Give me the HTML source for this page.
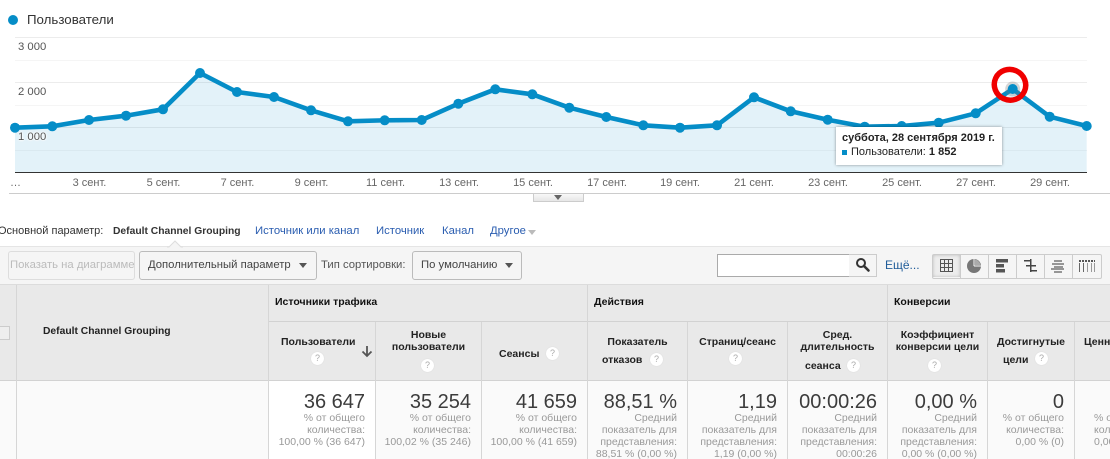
<!DOCTYPE html>
<html><head><meta charset="utf-8">
<style>
html,body{margin:0;padding:0;background:#fff;}
#p{position:relative;width:1110px;height:459px;overflow:hidden;font-family:"Liberation Sans",sans-serif;background:#fff;color:#333;}
.a{position:absolute;white-space:nowrap;}
.x{position:absolute;top:177px;font-size:11px;line-height:13px;color:#666;width:60px;text-align:center;}
.y{position:absolute;left:18px;font-size:11.3px;line-height:14px;color:#555;text-shadow:0 0 2px #fff,0 0 2px #fff,0 0 2px #fff;}
.l{position:absolute;font-size:11.3px;line-height:14px;top:224px;white-space:nowrap;}
.btn{position:absolute;top:251px;height:27px;border:1px solid #ccc;border-radius:3px;background:#f5f5f5;font-size:11.3px;line-height:27px;color:#444;white-space:nowrap;box-sizing:content-box;}
.tri{position:absolute;width:0;height:0;border-left:4px solid transparent;border-right:4px solid transparent;border-top:5px solid #555;}
.v{position:absolute;width:1px;background:#d6d6d6;}
.h{position:absolute;height:1px;background:#d2d2d2;}
.gh{position:absolute;top:295px;font-size:10.5px;font-weight:bold;line-height:14px;color:#111;white-space:nowrap;}
.ch{position:absolute;font-size:10.5px;font-weight:bold;line-height:12px;color:#222;text-align:center;white-space:nowrap;}
.q{position:absolute;width:13px;height:13px;border-radius:50%;background:#fff;color:#aaa;font-size:9px;line-height:13px;text-align:center;font-weight:normal;box-shadow:0 0 1px #ccc;}
.n{position:absolute;top:390px;font-size:20px;line-height:24px;color:#3c3c3c;text-align:right;white-space:nowrap;}
.s{position:absolute;top:412px;font-size:10.5px;line-height:12px;color:#999;text-align:right;white-space:nowrap;}
</style></head><body><div id="p">

<svg class="a" style="left:6px;top:13px" width="14" height="14"><circle cx="7" cy="7" r="5" fill="#058dc7"/></svg>
<div class="a" style="left:27px;top:12px;font-size:13.3px;line-height:16px;color:#333;">Пользователи</div>

<svg class="a" style="left:0;top:0" width="1110" height="200">
<g stroke-width="1" shape-rendering="crispEdges">
<path d="M15 37.5H1087M15 82.5H1087M15 127.5H1087" stroke="#ececec"/>
<path d="M15 60.5H1087M15 105.5H1087M15 150.5H1087" stroke="#f5f5f5"/>
</g>
<polygon fill="#058dc7" fill-opacity="0.115" points="15,127.7 52.3,126.3 89,120 126,115.7 163,109.3 200,73 237,92 274,97 311,110.3 348,121.3 384.7,120.3 421.7,120 458.3,103.7 495.3,89.3 532.3,94.3 569.3,107.7 606.3,117 643.3,125.3 680,127.7 717,125.3 754,97.3 790.7,111.3 827.7,119.7 864.7,126.7 901.7,126 938.7,122.7 975.7,113.3 1012.7,89 1049.7,116.7 1086.7,126 1086.7,172 15,172"/>
<path d="M15 172.5H1087" stroke="#333" stroke-width="1" shape-rendering="crispEdges"/>
<path d="M9 193.5H1110" stroke="#ccc" stroke-width="1" shape-rendering="crispEdges"/>
<polyline fill="none" stroke="#058dc7" stroke-width="4.6" stroke-linejoin="round" points="15,127.7 52.3,126.3 89,120 126,115.7 163,109.3 200,73 237,92 274,97 311,110.3 348,121.3 384.7,120.3 421.7,120 458.3,103.7 495.3,89.3 532.3,94.3 569.3,107.7 606.3,117 643.3,125.3 680,127.7 717,125.3 754,97.3 790.7,111.3 827.7,119.7 864.7,126.7 901.7,126 938.7,122.7 975.7,113.3 1012.7,89 1049.7,116.7 1086.7,126"/>
<g fill="#058dc7">
<circle cx="15" cy="127.7" r="5"/><circle cx="52.3" cy="126.3" r="5"/><circle cx="89" cy="120" r="5"/><circle cx="126" cy="115.7" r="5"/><circle cx="163" cy="109.3" r="5"/><circle cx="200" cy="73" r="5"/><circle cx="237" cy="92" r="5"/><circle cx="274" cy="97" r="5"/><circle cx="311" cy="110.3" r="5"/><circle cx="348" cy="121.3" r="5"/><circle cx="384.7" cy="120.3" r="5"/><circle cx="421.7" cy="120" r="5"/><circle cx="458.3" cy="103.7" r="5"/><circle cx="495.3" cy="89.3" r="5"/><circle cx="532.3" cy="94.3" r="5"/><circle cx="569.3" cy="107.7" r="5"/><circle cx="606.3" cy="117" r="5"/><circle cx="643.3" cy="125.3" r="5"/><circle cx="680" cy="127.7" r="5"/><circle cx="717" cy="125.3" r="5"/><circle cx="754" cy="97.3" r="5"/><circle cx="790.7" cy="111.3" r="5"/><circle cx="827.7" cy="119.7" r="5"/><circle cx="864.7" cy="126.7" r="5"/><circle cx="901.7" cy="126" r="5"/><circle cx="938.7" cy="122.7" r="5"/><circle cx="975.7" cy="113.3" r="5"/><circle cx="1049.7" cy="116.7" r="5"/><circle cx="1086.7" cy="126" r="5"/>
</g>
<circle cx="1012.7" cy="89" r="7.5" fill="#777" fill-opacity="0.3"/>
<circle cx="1012.7" cy="89" r="5" fill="#058dc7"/>
<ellipse cx="1010" cy="84.8" rx="15.8" ry="15.3" fill="none" stroke="#f00000" stroke-width="5.5" transform="rotate(25 1010 84.8)"/>
</svg>

<div class="y" style="top:40px">3 000</div>
<div class="y" style="top:85px">2 000</div>
<div class="y" style="top:130px">1 000</div>

<div class="a" style="left:10px;top:177px;font-size:11px;line-height:13px;color:#666;">…</div>
<div class="x" style="left:59.5px">3 сент.</div>
<div class="x" style="left:133.5px">5 сент.</div>
<div class="x" style="left:207.5px">7 сент.</div>
<div class="x" style="left:281.5px">9 сент.</div>
<div class="x" style="left:355.5px">11 сент.</div>
<div class="x" style="left:429px">13 сент.</div>
<div class="x" style="left:503px">15 сент.</div>
<div class="x" style="left:577px">17 сент.</div>
<div class="x" style="left:650px">19 сент.</div>
<div class="x" style="left:724px">21 сент.</div>
<div class="x" style="left:798px">23 сент.</div>
<div class="x" style="left:872px">25 сент.</div>
<div class="x" style="left:946px">27 сент.</div>
<div class="x" style="left:1020px">29 сент.</div>

<div class="a" style="left:836px;top:127px;width:166px;height:38px;background:#fff;box-shadow:0 0 3px rgba(0,0,0,.4);"></div>
<div class="a" style="left:842px;top:131px;font-size:11px;font-weight:bold;line-height:14px;color:#222;">суббота, 28 сентября 2019 г.</div>
<div class="a" style="left:842px;top:150px;width:5px;height:5px;background:#058dc7;"></div>
<div class="a" style="left:851px;top:145px;font-size:11px;line-height:14px;color:#222;">Пользователи: <b>1 852</b></div>

<div class="a" style="left:533px;top:194px;width:49px;height:7px;border:1px solid #ccc;border-top:0;background:linear-gradient(#f8f8f8,#e6e6e6);"></div>
<div class="tri" style="left:554px;top:195px;border-top-color:#666;"></div>

<div class="l" style="left:-2px;color:#333;font-size:11px;">Основной параметр:</div>
<div class="l" style="left:113px;top:225px;font-weight:bold;color:#333;font-size:10.3px;">Default Channel Grouping</div>
<div class="l" style="left:255px;color:#2a5db0;">Источник или канал</div>
<div class="l" style="left:376px;color:#2a5db0;">Источник</div>
<div class="l" style="left:442px;color:#2a5db0;">Канал</div>
<div class="l" style="left:490px;color:#2a5db0;">Другое</div>
<div class="tri" style="left:528px;top:230px;border-top-color:#bbb;"></div>

<div class="a" style="left:0;top:246px;width:1110px;height:37px;background:#f5f5f5;border-top:1px solid #e5e5e5;border-bottom:2px solid #dcdcdc;box-sizing:content-box;"></div>
<svg class="a" style="left:167px;top:240px" width="16" height="8"><path d="M0 7H2L8 1L14 7H16" fill="#f5f5f5" stroke="#ddd"/></svg>

<div class="btn" style="left:8px;width:125px;color:#bbb;border-color:#ddd;overflow:hidden;text-indent:1px;">Показать на диаграмме</div>
<div class="btn" style="left:139px;width:176px;text-indent:8px;border-color:#bbb;">Дополнительный параметр</div>
<div class="tri" style="left:299px;top:263px;"></div>
<div class="a" style="left:321px;top:258px;font-size:11.3px;line-height:14px;color:#555;">Тип сортировки:</div>
<div class="btn" style="left:412px;width:108px;text-indent:8px;border-color:#bbb;">По умолчанию</div>
<div class="tri" style="left:505px;top:263px;"></div>

<div class="a" style="left:717px;top:254px;width:131px;height:21px;background:#fff;border:1px solid #aaa;"></div>
<div class="a" style="left:849px;top:254px;width:27px;height:21px;background:#f5f5f5;border:1px solid #ccc;border-left:0;"></div>
<svg class="a" style="left:854px;top:256px" width="17" height="17"><circle cx="7" cy="7" r="4" fill="none" stroke="#333" stroke-width="2"/><path d="M10 10L14.5 14.5" stroke="#333" stroke-width="2.6" stroke-linecap="round"/></svg>
<div class="a" style="left:885px;top:258px;font-size:12px;line-height:14px;color:#1f5c99;">Ещё...</div>

<div class="a" style="left:932px;top:254px;width:168px;height:23px;border:1px solid #ccc;border-radius:2px;background:#f5f5f5;"></div>
<div class="a" style="left:933px;top:255px;width:27px;height:22px;background:#ededed;box-shadow:inset 0 0 3px #bbb;"></div>
<svg class="a" style="left:932px;top:254px" width="169" height="24">
<g stroke="#ccc" shape-rendering="crispEdges"><path d="M28.5 1V24M56.5 1V24M84.5 1V24M112.5 1V24M140.5 1V24"/></g>
<g stroke="#555" fill="none" shape-rendering="crispEdges"><rect x="8.5" y="5.5" width="12" height="12"/><path d="M12.5 5V18M16.5 5V18M8 9.5H21M8 13.5H21"/></g>
<circle cx="42" cy="12" r="7" fill="#777"/><path d="M42 12V5M42 12H49" stroke="#f5f5f5" stroke-width="1"/><path d="M43 5.5A6.5 6.5 0 0 1 48.5 11H43Z" fill="#aaa"/>
<g fill="#555"><rect x="64" y="5" width="12" height="3.5"/><rect x="64" y="10" width="8" height="3.5"/><rect x="64" y="15" width="9" height="3.5"/></g>
<g stroke="#444" fill="none" stroke-width="1.5" shape-rendering="crispEdges"><path d="M92 6.5H98M98.5 5V18M94 11.5H104M98 16.5H105"/></g>
<g fill="none" stroke-width="1.5"><path d="M122 7H130M120 10H132M122 13H131M119 15H132M122 18H130" stroke="#777"/></g>
<g stroke="#555" fill="none" shape-rendering="crispEdges" stroke-dasharray="2 1" stroke-width="2"><path d="M147 7H163"/></g>
<g stroke="#666" fill="none" shape-rendering="crispEdges"><path d="M147.5 9V18M151.5 9V18"/></g>
<g stroke="#999" fill="none" shape-rendering="crispEdges"><path d="M155.5 9V18M159.5 9V18M162.5 9V18"/></g>
</svg>

<div class="a" style="left:0;top:285px;width:1110px;height:95px;background:#e9e9e9;"></div>
<div class="a" style="left:0;top:381px;width:1110px;height:78px;background:#fafafa;"></div>
<div class="a" style="left:269px;top:381px;width:106px;height:78px;background:#fff;"></div>
<div class="h" style="left:0;top:284px;width:1110px;background:#dcdcdc;"></div>
<div class="h" style="left:269px;top:321px;width:841px;"></div>
<div class="h" style="left:0;top:380px;width:1110px;"></div>
<div class="v" style="left:16px;top:285px;height:174px;"></div>
<div class="v" style="left:268px;top:285px;height:174px;"></div>
<div class="v" style="left:375px;top:322px;height:137px;"></div>
<div class="v" style="left:481px;top:322px;height:137px;"></div>
<div class="v" style="left:587px;top:285px;height:174px;"></div>
<div class="v" style="left:687px;top:322px;height:137px;"></div>
<div class="v" style="left:787px;top:322px;height:137px;"></div>
<div class="v" style="left:887px;top:285px;height:174px;"></div>
<div class="v" style="left:987px;top:322px;height:137px;"></div>
<div class="v" style="left:1074px;top:322px;height:137px;"></div>
<div class="a" style="left:-4px;top:326px;width:12px;height:12px;background:#eee;border:1px solid #ccc;"></div>

<div class="a" style="left:43px;top:325px;font-size:10.3px;font-weight:bold;line-height:14px;color:#222;">Default Channel Grouping</div>
<div class="gh" style="left:275px;">Источники трафика</div>
<div class="gh" style="left:594px;">Действия</div>
<div class="gh" style="left:894px;">Конверсии</div>

<div class="ch" style="left:281px;top:336px;">Пользователи</div>
<div class="q" style="left:311px;top:352px;">?</div>
<svg class="a" style="left:361px;top:345px" width="12" height="13"><path d="M6 1V11M1.5 6.5L6 11L10.5 6.5" fill="none" stroke="#555" stroke-width="1.8"/></svg>

<div class="ch" style="left:376px;top:329px;width:105px;">Новые<br>пользователи</div>
<div class="q" style="left:421px;top:359px;">?</div>

<div class="ch" style="left:499px;top:348px;">Сеансы</div>
<div class="q" style="left:546px;top:347px;">?</div>

<div class="ch" style="left:588px;top:336px;width:99px;">Показатель</div>
<div class="ch" style="left:602px;top:354px;">отказов</div>
<div class="q" style="left:650px;top:353px;">?</div>

<div class="ch" style="left:688px;top:336px;width:99px;">Страниц/сеанс</div>
<div class="q" style="left:729px;top:352px;">?</div>

<div class="ch" style="left:788px;top:329px;width:99px;">Сред.<br>длительность</div>
<div class="ch" style="left:805px;top:360px;">сеанса</div>
<div class="q" style="left:847px;top:359px;">?</div>

<div class="ch" style="left:888px;top:329px;width:99px;">Коэффициент<br>конверсии цели</div>
<div class="q" style="left:928px;top:359px;">?</div>

<div class="ch" style="left:988px;top:336px;width:86px;">Достигнутые</div>
<div class="ch" style="left:1003px;top:354px;">цели</div>
<div class="q" style="left:1035px;top:352px;">?</div>

<div class="ch" style="left:1084px;top:336px;">Ценность</div>

<div class="n" style="right:745px;">36 647</div>
<div class="s" style="right:745px;">% от общего<br>количества:<br>100,00 % (36 647)</div>
<div class="n" style="right:639px;">35 254</div>
<div class="s" style="right:639px;">% от общего<br>количества:<br>100,02 % (35 246)</div>
<div class="n" style="right:533px;">41 659</div>
<div class="s" style="right:533px;">% от общего<br>количества:<br>100,00 % (41 659)</div>
<div class="n" style="right:433px;">88,51 %</div>
<div class="s" style="right:433px;">Средний<br>показатель для<br>представления:<br>88,51 % (0,00 %)</div>
<div class="n" style="right:333px;">1,19</div>
<div class="s" style="right:333px;">Средний<br>показатель для<br>представления:<br>1,19 (0,00 %)</div>
<div class="n" style="right:233px;">00:00:26</div>
<div class="s" style="right:233px;">Средний<br>показатель для<br>представления:<br>00:00:26</div>
<div class="n" style="right:133px;">0,00 %</div>
<div class="s" style="right:133px;">Средний<br>показатель для<br>представления:<br>0,00 % (0,00 %)</div>
<div class="n" style="right:46px;">0</div>
<div class="s" style="right:46px;">% от общего<br>количества:<br>0,00 % (0)</div>
<div class="s" style="left:1094px;text-align:left;">% от<br>кол<br>0,00</div>

</div></body></html>
